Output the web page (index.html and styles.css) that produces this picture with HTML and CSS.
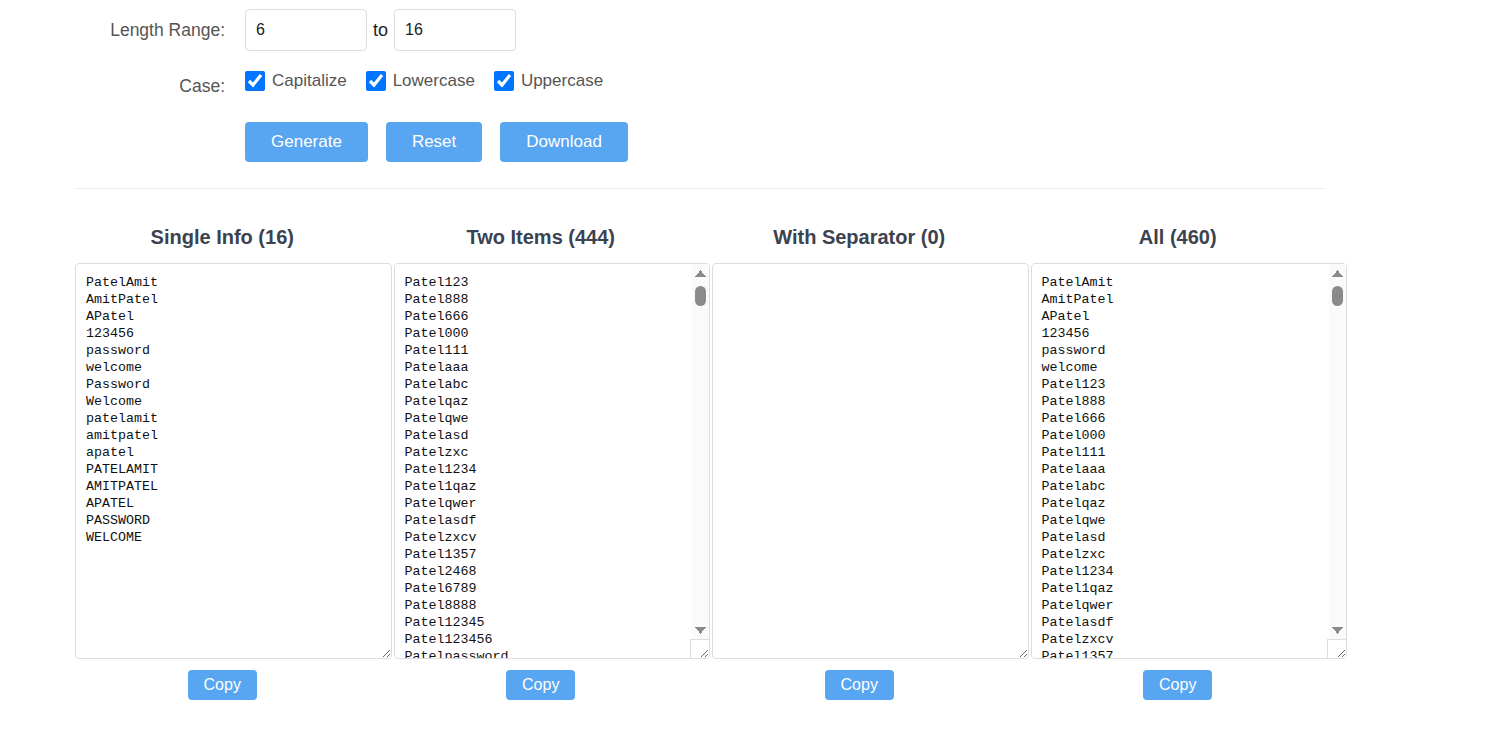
FILE: index.html
```html
<!DOCTYPE html>
<html>
<head>
    <title>Password Dictionary Generator</title>
    <link rel="stylesheet" href="styles.css">
</head>
<body>
    <div class="wrap">
        <form id="gen-form">
            <div class="form-row">
                <label class="row-label">Length Range:</label>
                <input type="text" id="min_len" class="num" value="6">
                <span class="to">to</span>
                <input type="text" id="max_len" class="num" value="16">
            </div>

            <div class="form-row case-row">
                <label class="row-label case-label">Case:</label>
                <label class="check"><input type="checkbox" checked> Capitalize</label>
                <label class="check"><input type="checkbox" checked> Lowercase</label>
                <label class="check"><input type="checkbox" checked> Uppercase</label>
            </div>

            <div class="form-row buttons">
                <span class="row-label"></span>
                <button type="button" class="btn">Generate</button>
                <button type="button" class="btn">Reset</button>
                <button type="button" class="btn">Download</button>
            </div>
        </form>

        <hr>

        <div class="results">
            <div class="col">
                <h3 id="t_single">Single Info (16)</h3>
                <div class="box">
                    <textarea id="single" spellcheck="false"></textarea>
                </div>
                <button type="button" class="copy">Copy</button>
            </div>
            <div class="col">
                <h3 id="t_two">Two Items (444)</h3>
                <div class="box">
                    <textarea id="two" spellcheck="false"></textarea>
                    <div class="sb"><span class="sb-up"></span><span class="sb-thumb"></span><span class="sb-fill"></span><span class="sb-down"></span></div>
                    <span class="sb-corner"></span>
                </div>
                <button type="button" class="copy">Copy</button>
            </div>
            <div class="col">
                <h3>With Separator (0)</h3>
                <div class="box">
                    <textarea id="sep" spellcheck="false"></textarea>
                </div>
                <button type="button" class="copy">Copy</button>
            </div>
            <div class="col">
                <h3 id="t_all">All (460)</h3>
                <div class="box">
                    <textarea id="all" spellcheck="false"></textarea>
                    <div class="sb"><span class="sb-up"></span><span class="sb-thumb"></span><span class="sb-fill"></span><span class="sb-down"></span></div>
                    <span class="sb-corner"></span>
                </div>
                <button type="button" class="copy">Copy</button>
            </div>
        </div>
    </div>

    <script>
        const single = ["PatelAmit", "AmitPatel", "APatel", "123456", "password", "welcome",
            "Password", "Welcome", "patelamit", "amitpatel", "apatel",
            "PATELAMIT", "AMITPATEL", "APATEL", "PASSWORD", "WELCOME"];

        const bases = ["Patel", "Amit", "patel", "amit", "PATEL", "AMIT",
            "PatelAmit", "AmitPatel", "APatel", "patelamit", "amitpatel", "apatel"];

        const suffixes = ["123", "888", "666", "000", "111", "aaa", "abc", "qaz", "qwe", "asd",
            "zxc", "1234", "1qaz", "qwer", "asdf", "zxcv", "1357", "2468", "6789", "8888",
            "12345", "123456", "password", "welcome", "admin", "love", "520", "1314",
            "2020", "2021", "2022", "2023", "2024", "@123", "!@#", "qwerty", "abc123"];

        const two = [];
        bases.forEach(function(b) {
            suffixes.forEach(function(s) { two.push(b + s); });
        });

        const all = single.slice(0, 6).concat(two, single.slice(6));

        document.getElementById("single").value = single.join("\n");
        document.getElementById("two").value = two.join("\n");
        document.getElementById("all").value = all.join("\n");
        document.getElementById("t_single").textContent = "Single Info (" + single.length + ")";
        document.getElementById("t_two").textContent = "Two Items (" + two.length + ")";
        document.getElementById("t_all").textContent = "All (" + all.length + ")";
    </script>
</body>
</html>
```

FILE: styles.css
```css
body {
    margin: 0;
    background-color: white;
    color: #333;
    font-family: "Liberation Sans", Arial, sans-serif;
}

.wrap {
    width: 1250px;
    margin-left: 75px;
    padding-top: 9px;
}

.form-row {
    display: flex;
    align-items: center;
    margin-bottom: 20px;
}

.row-label {
    width: 150px;
    margin-right: 20px;
    text-align: right;
    font-size: 17.5px;
    color: #555;
}

.case-row {
    align-items: flex-start;
    margin-bottom: 25px;
}

.case-label {
    padding-top: 5px;
}

.num {
    width: 100px;
    height: 40px;
    padding: 0 10px;
    border: 1px solid #ddd;
    border-radius: 4px;
    font-size: 16px;
    font-family: "Liberation Sans", Arial, sans-serif;
    color: #222;
}

.to {
    font-size: 18px;
    color: #222;
    margin: 0 6px;
}

.check {
    display: flex;
    align-items: center;
    font-size: 17px;
    color: #555;
    margin-right: 19px;
}

.check input {
    width: 20px;
    height: 20px;
    margin: 0 7px 0 0;
}

.btn {
    height: 40px;
    padding: 0 26px;
    margin-right: 18px;
    border: none;
    border-radius: 4px;
    background-color: #58a5f1;
    color: white;
    font-size: 17px;
    font-family: "Liberation Sans", Arial, sans-serif;
}

hr {
    border: none;
    border-top: 1px solid #eee;
    margin: 26px 0 0 0;
}

.results {
    display: grid;
    grid-template-columns: repeat(4, 1fr);
    gap: 24px;
    margin-top: 37px;
}

.col {
    display: flex;
    flex-direction: column;
    align-items: center;
    min-width: 0;
}

.col h3 {
    margin: 0 0 15px 0;
    font-size: 20px;
    line-height: 22px;
    color: #3b4250;
    text-align: center;
}

.box {
    position: relative;
    align-self: flex-start;
    width: calc(100% + 22px);
}

textarea {
    display: block;
    box-sizing: border-box;
    width: 100%;
    height: 396px;
    padding: 10px;
    border: 1px solid #ddd;
    border-radius: 4px;
    font-family: "Liberation Mono", monospace;
    font-size: 13.33px;
    line-height: 17px;
    color: #111;
    resize: both;
    margin: 0;
    scrollbar-width: none;
}

/* classic scrollbar drawn over the long lists */
.sb {
    position: absolute;
    top: 1px;
    right: 1px;
    bottom: 20px;
    width: 17px;
    background-color: #fafafa;
    display: flex;
    flex-direction: column;
    align-items: center;
    pointer-events: none;
}

.sb-up {
    width: 11px;
    height: 7px;
    margin-top: 6px;
    background: conic-gradient(from 142deg at 50% 0, #8a8a8a 76deg, transparent 76deg);
}

.sb-thumb {
    width: 11px;
    height: 20px;
    margin-top: 9px;
    border-radius: 6px;
    background-color: #8a8a8a;
}

.sb-fill {
    flex: 1;
}

.sb-down {
    width: 11px;
    height: 7px;
    margin-bottom: 5px;
    background: conic-gradient(from -38deg at 50% 100%, #8a8a8a 76deg, transparent 76deg);
}

.sb-corner {
    position: absolute;
    right: 1px;
    bottom: 1px;
    width: 18px;
    height: 18px;
    border-left: 1px solid #ddd;
    border-top: 1px solid #ddd;
    pointer-events: none;
}

.copy {
    margin-top: 11px;
    height: 30px;
    padding: 0 16px;
    border: none;
    border-radius: 4px;
    background-color: #58a5f1;
    color: white;
    font-size: 16px;
    font-family: "Liberation Sans", Arial, sans-serif;
}
```
